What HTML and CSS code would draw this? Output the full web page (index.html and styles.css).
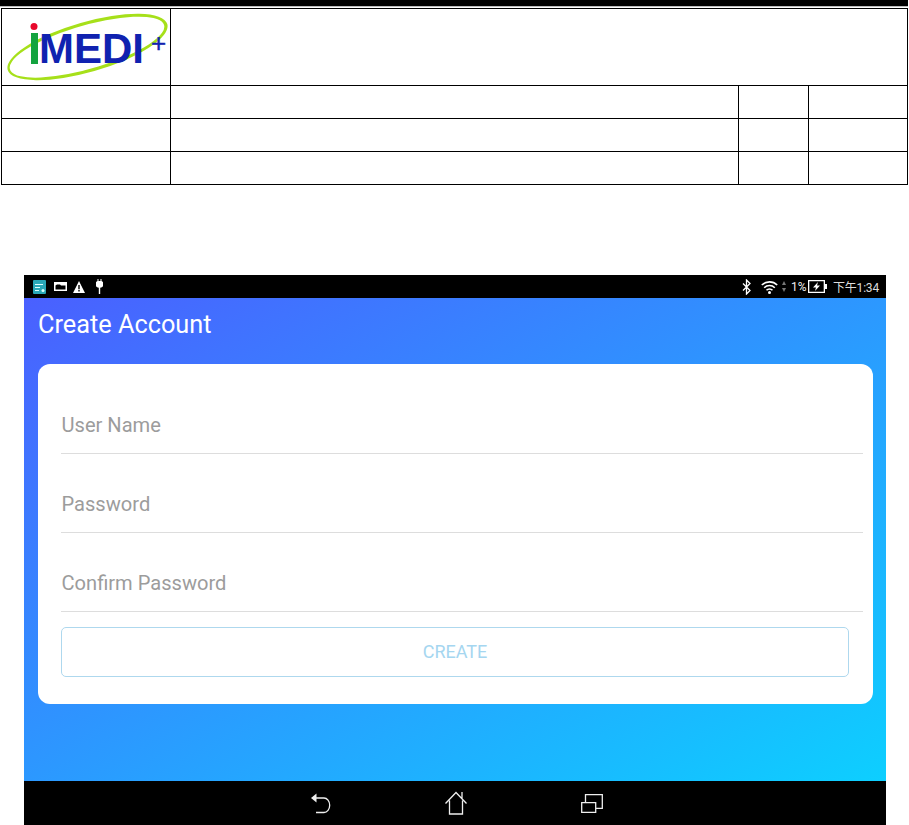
FILE: index.html
```html
<!DOCTYPE html>
<html>
  <head>
    <meta charset="utf-8">
    <title>Create Account</title>
    <link rel="stylesheet" href="styles.css">
  </head>

  <body>
    <div class="doc-rule"></div>

    <table class="doc-table">
      <colgroup>
        <col class="col-a"><col class="col-b"><col class="col-c"><col class="col-d">
      </colgroup>
      <tr class="logo-row">
        <td>
          <svg class="logo" width="168" height="76" viewBox="0 0 168 76">
            <g transform="translate(85.5 38) rotate(-16)">
              <path fill="#a6e01a" fill-rule="evenodd" d="M-83 0a83 25 0 1 0 166 0a83 25 0 1 0-166 0zM-80.500 1.500a80 21.800 0 1 1 160 -3a80 21.800 0 1 1-160 3z"/>
            </g>
            <circle cx="32" cy="17.500" r="3.500" fill="#e8082c"/>
            <rect x="29" y="24" width="7" height="31" fill="#13a33f"/>
            <text class="logo-text" x="37" y="54">MEDI</text>
            <text class="logo-plus" x="149" y="43">+</text>
          </svg>
        </td>
        <td colspan="3"></td>
      </tr>
      <tr class="doc-row"><td></td><td></td><td></td><td></td></tr>
      <tr class="doc-row"><td></td><td></td><td></td><td></td></tr>
      <tr class="doc-row"><td></td><td></td><td></td><td></td></tr>
    </table>

    <div class="tablet">
      <div class="status-bar">
        <div class="status-left">
          <svg width="13" height="14" viewBox="0 0 13 14">
            <rect width="13" height="14" rx="1" fill="#2aa8b8"/>
            <path d="M2 4.500h8M2 7.500h5M2 10.500h4" stroke="#dff" stroke-width="1"/>
            <circle cx="10" cy="10.500" r="1.500" fill="#dff"/>
          </svg>
          <svg class="icon-card" width="13" height="9" viewBox="0 0 13 9">
            <path fill="#fff" fill-rule="evenodd" d="M0 0h13v9H0zM1.500 3.500v4h10v-4H7L6 2.500H3z"/>
          </svg>
          <svg class="icon-warn" width="12" height="12" viewBox="0 0 12 12">
            <path fill="#fff" fill-rule="evenodd" d="M6 0L12 12H0zM5.300 4v4.300h1.400V4zM5.300 9v1.400h1.400V9z"/>
          </svg>
          <svg width="7" height="15" viewBox="0 0 7 15">
            <path fill="#fff" d="M1.500 0h1v2h2V0h1v2.100A3.500 3.500 0 0 1 4.200 8.800V15H2.800V8.800A3.500 3.500 0 0 1 1.500 2.100z"/>
          </svg>
        </div>
        <div class="status-right">
          <svg class="bt" width="9" height="16" viewBox="0 0 9 16">
            <path fill="none" stroke="#fff" stroke-width="1.300" d="M1 4.500l7 7-3.500 3.500V1L8 4.500 1 11.500"/>
          </svg>
          <svg class="wifi" width="17" height="14" viewBox="0 0 17 14">
            <path fill="none" stroke="#fff" stroke-width="1.600" d="M.8 5a11 11 0 0 1 15.400 0M3.200 7.700a7.500 7.500 0 0 1 10.600 0M5.500 10.200a4.200 4.200 0 0 1 6 0"/>
            <circle cx="8.500" cy="12.400" r="1.500" fill="#fff"/>
          </svg>
          <svg class="updown" width="4" height="11" viewBox="0 0 4 11">
            <path fill="#777" d="M2 0l2 4H0zM2 11L0 7h4z"/>
          </svg>
          <span class="status-pct">1%</span>
          <svg class="battery" width="19" height="13" viewBox="0 0 19 13">
            <path fill="#fff" fill-rule="evenodd" d="M0 0h17v13H0zM1.300 1.300v10.400h14.400V1.300zM17 4h2v5h-2z"/>
            <path fill="#fff" d="M10 2L5 7.500h3L7 11l5-5.500H9z"/>
          </svg>
          <span class="status-time">下午1:34</span>
        </div>
      </div>

      <div class="screen">
        <h1 class="screen-title">Create Account</h1>
        <div class="card">
          <div class="field">User Name</div>
          <div class="field">Password</div>
          <div class="field">Confirm Password</div>
          <div class="create-btn">CREATE</div>
        </div>
      </div>

      <div class="nav-bar">
        <svg width="20" height="24" viewBox="0 0 20 24">
          <path fill="none" stroke="#eee" stroke-width="1.300" d="M3 7h10a5.500 7 0 0 1 0 14.500H5"/>
          <path fill="#eee" d="M0 7L5.500 2.500v9z"/>
        </svg>
        <svg width="22" height="24" viewBox="0 0 22 24">
          <path fill="none" stroke="#eee" stroke-width="1.300" d="M.5 12.500L11 1.500l10.500 11M4.500 9.500V23h13V9.500M17 1v7"/>
        </svg>
        <svg width="22" height="19" viewBox="0 0 22 19">
          <path fill="none" stroke="#eee" stroke-width="1.300" d="M.7 8.700h14v9.600H.7zM4.500 8.500V.7h16.800v13.600h-6.500"/>
        </svg>
      </div>
    </div>
  </body>
</html>
```

FILE: styles.css
```css
html, body {
  margin: 0;
  padding: 0;
  height: 825px;
  overflow: hidden;
  background-color: #fff;
  font-family: Roboto, "Noto Sans CJK SC", sans-serif;
}

/* document header */
.doc-rule {
  height: 6px;
  width: 908px;
  background-color: #000;
  border-bottom: 1px solid #bbb;
  margin-bottom: 1px;
}
.doc-table {
  margin-left: 1px;
  width: 906px;
  height: 177px;
  table-layout: fixed;
  border-collapse: collapse;
  border: 1.500px solid #000;
}
.doc-table td {
  border: 1.500px solid #000;
  padding: 0;
}
.col-a { width: 169px; }
.col-b { width: 568px; }
.col-c { width: 70px; }
.col-d { width: 99px; }
.logo-row { height: 77px; }
.doc-row { height: 33px; }
.logo {
  display: block;
}
.logo-text {
  font-family: "Liberation Sans", sans-serif;
  font-size: 42px;
  font-weight: bold;
  fill: #1022b0;
}
.logo-plus {
  font-family: "Liberation Sans", sans-serif;
  font-size: 26px;
  fill: #1022b0;
  stroke: #1022b0;
  stroke-width: 0.4px;
}

/* tablet screenshot */
.tablet {
  margin: 90px 0 0 24px;
  width: 862px;
  height: 550px;
  display: flex;
  flex-direction: column;
}
.status-bar {
  height: 23px;
  background-color: #000;
  display: flex;
  justify-content: space-between;
  align-items: center;
  padding: 0 7px 0 9px;
  color: #eee;
}
.status-left {
  display: flex;
  align-items: center;
  gap: 8px;
}
.icon-card { margin-right: -2px; }
.icon-warn { margin-right: 3px; }
.status-right {
  display: flex;
  align-items: center;
}
.bt { margin-right: 10px; }
.updown { margin: 0 5px 0 4px; }
.status-pct {
  font-size: 12px;
  width: 17px;
}
.status-time {
  font-size: 12px;
  letter-spacing: -0.2px;
  color: #ddd;
  margin-left: 6px;
  width: 46px;
  white-space: nowrap;
}
.screen {
  flex: 1;
  background: linear-gradient(to bottom right, #4a60ff, #2c98ff 50%, #0dcfff);
  padding: 0 13px 0 14px;
}
.screen-title {
  margin: 0;
  height: 66px;
  line-height: 54px;
  font-size: 25.3px;
  font-weight: 400;
  color: #fff;
}
.card {
  background-color: #fff;
  border-radius: 12px;
  height: 340px;
  box-sizing: border-box;
  padding: 11px 10px 27px 23px;
}
.field {
  height: 79px;
  box-sizing: border-box;
  border-bottom: 1px solid #ddd;
  padding: 38px 0 0 0.5px;
  font-size: 20.1px;
  line-height: 24px;
  color: #9c9c9c;
}
.create-btn {
  margin: 15px 14px 0 0;
  height: 50px;
  box-sizing: border-box;
  border: 1px solid #aed8ee;
  border-radius: 5px;
  text-align: center;
  line-height: 47px;
  font-size: 18px;
  color: #a5d6f0;
}
.nav-bar {
  height: 44px;
  background-color: #000;
  display: flex;
  align-items: center;
  justify-content: center;
  gap: 114px;
  padding-left: 4px;
}
```
